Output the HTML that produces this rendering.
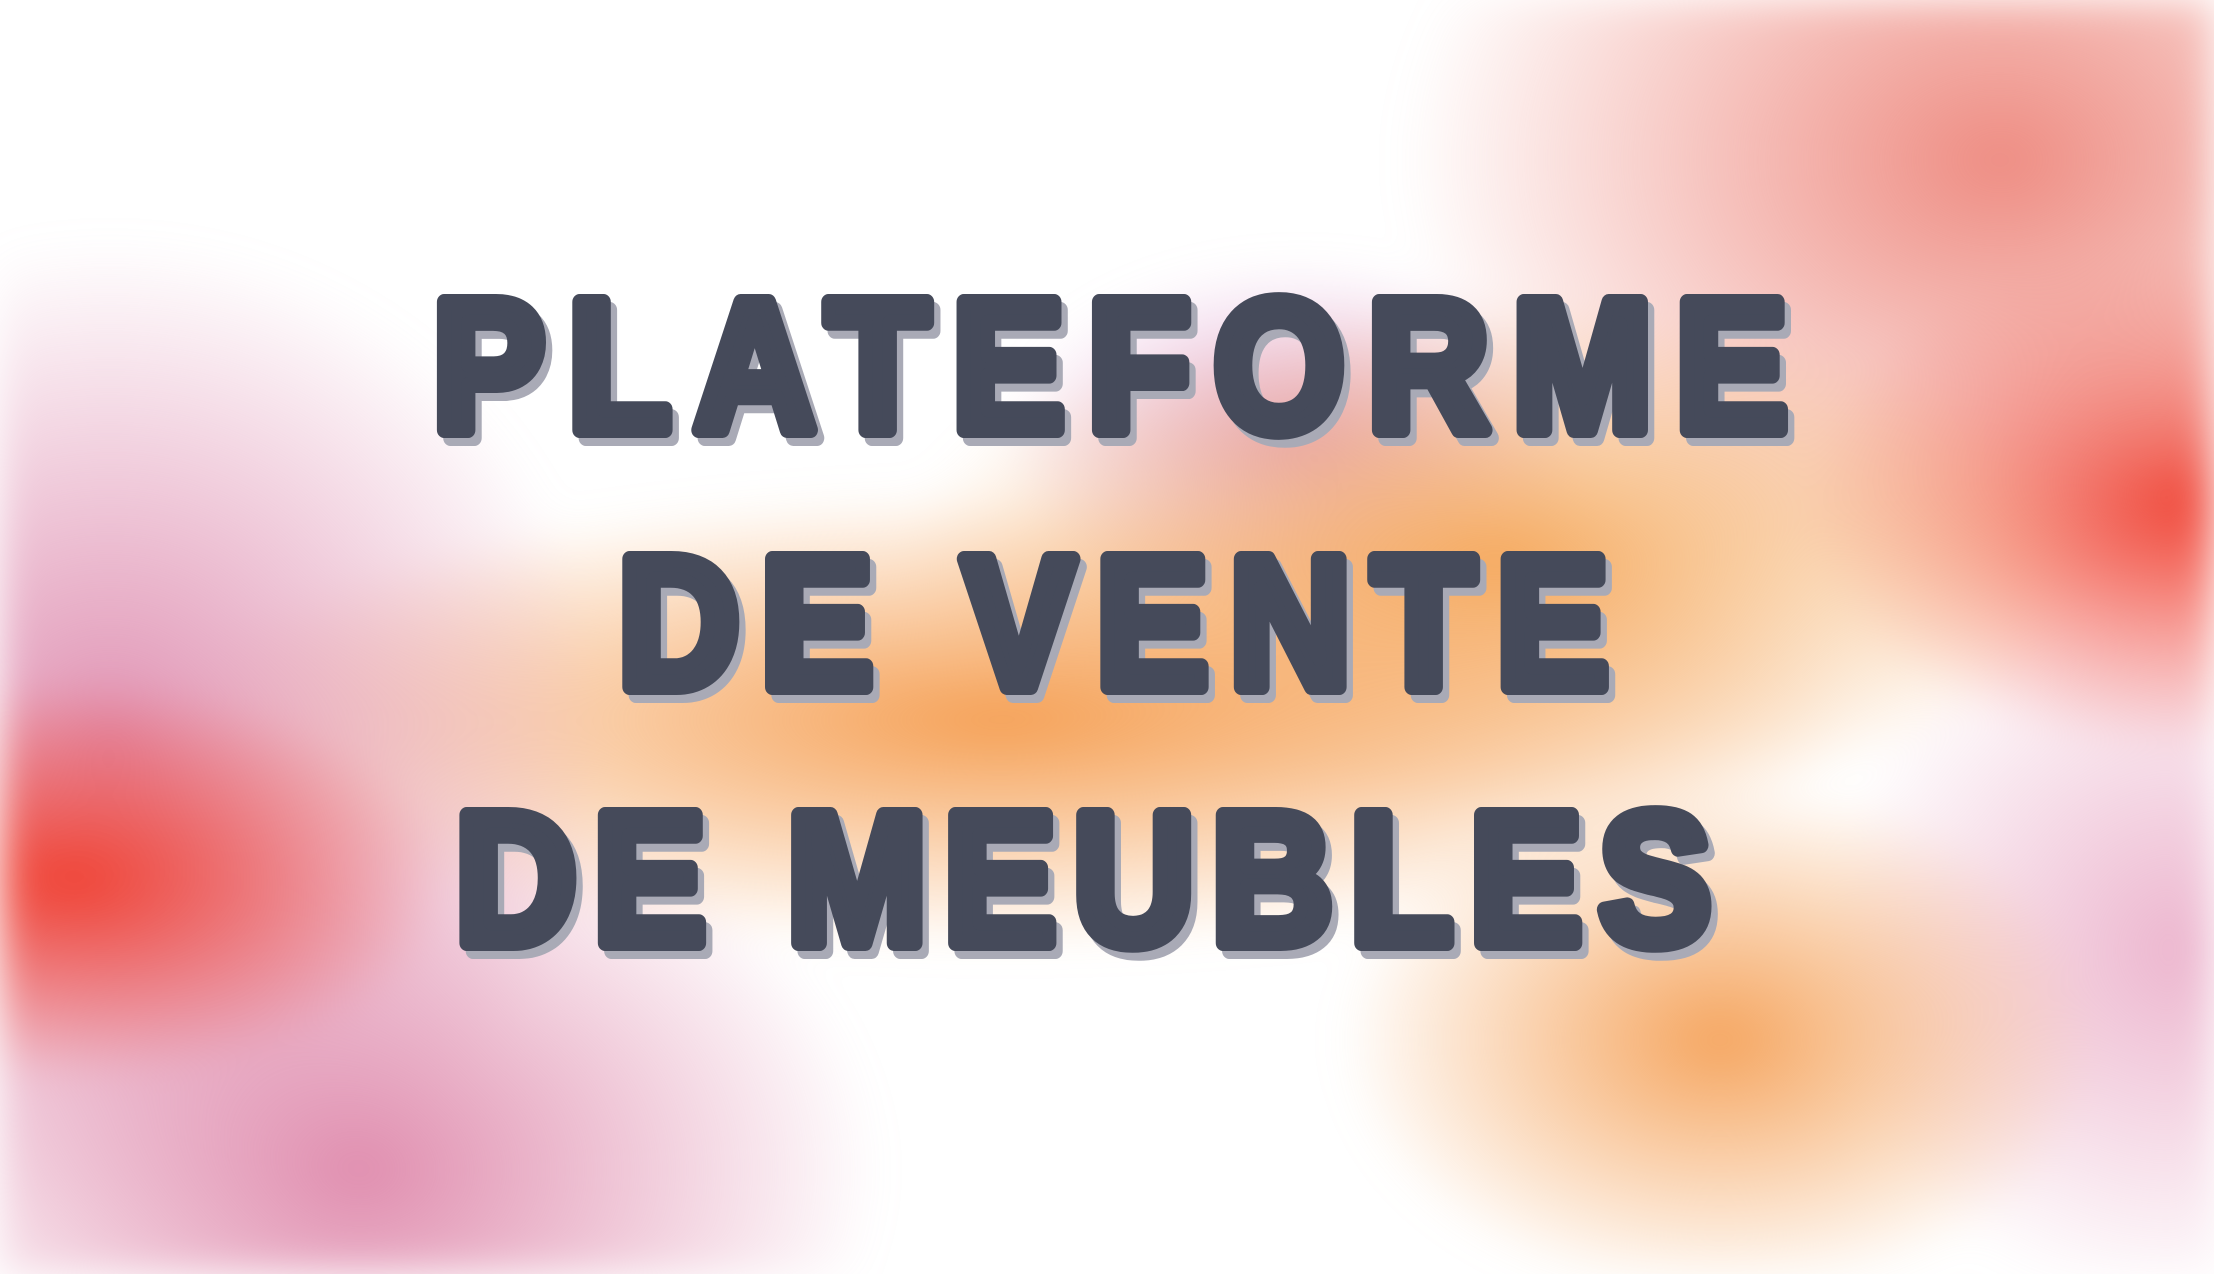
<!DOCTYPE html>
<html><head><meta charset="utf-8"><style>
html,body{margin:0;padding:0;}
body{width:2214px;height:1274px;overflow:hidden;position:relative;background:#fff;}
.bg{position:absolute;inset:0;filter:blur(20px);
background:
radial-gradient(ellipse 380px 200px at 70px 880px, rgba(240,65,50,1), rgba(240,65,50,0) 100%),
radial-gradient(ellipse 500px 500px at 110px 740px, rgba(222,140,175,0.95), rgba(222,140,175,0) 100%),
radial-gradient(ellipse 520px 380px at 360px 1170px, rgba(222,135,170,0.95), rgba(222,135,170,0) 100%),
radial-gradient(ellipse 850px 230px at 1000px 720px, rgba(245,160,85,1), rgba(245,160,85,0) 100%),
radial-gradient(ellipse 600px 260px at 1500px 560px, rgba(245,170,95,1), rgba(245,170,95,0) 100%),
radial-gradient(ellipse 380px 260px at 1720px 1040px, rgba(245,165,95,1), rgba(245,165,95,0) 100%),
radial-gradient(ellipse 300px 180px at 1300px 440px, rgba(215,140,200,0.75), rgba(215,140,200,0) 100%),
radial-gradient(ellipse 600px 440px at 2000px 160px, rgba(238,140,130,1), rgba(238,140,130,0) 100%),
radial-gradient(ellipse 380px 250px at 2180px 500px, rgba(240,60,45,1), rgba(240,60,45,0) 100%),
radial-gradient(ellipse 360px 360px at 2180px 950px, rgba(228,150,185,0.7), rgba(228,150,185,0) 100%);}
svg{position:absolute;left:0;top:0;}
</style></head><body>
<div class="bg"></div>
<svg width="2214" height="1274" viewBox="0 0 2214 1274" font-family="Liberation Sans, sans-serif" font-weight="bold" font-size="186">
<g transform="scale(0.9,1)">
<g fill="#a9aab6" stroke="#a9aab6" stroke-width="16" stroke-linejoin="round">
<text x="488" y="438" textLength="1505" lengthAdjust="spacing">PLATEFORME</text>
<text x="694" y="695" textLength="1100" lengthAdjust="spacing">DE VENTE</text>
<text x="513" y="951" textLength="1395" lengthAdjust="spacing">DE MEUBLES</text>
</g>
<g fill="#454a5a" stroke="#454a5a" stroke-width="16" stroke-linejoin="round">
<text x="481" y="430" textLength="1505" lengthAdjust="spacing">PLATEFORME</text>
<text x="687" y="687" textLength="1100" lengthAdjust="spacing">DE VENTE</text>
<text x="506" y="943" textLength="1395" lengthAdjust="spacing">DE MEUBLES</text>
</g>
</g>
</svg>
</body></html>
